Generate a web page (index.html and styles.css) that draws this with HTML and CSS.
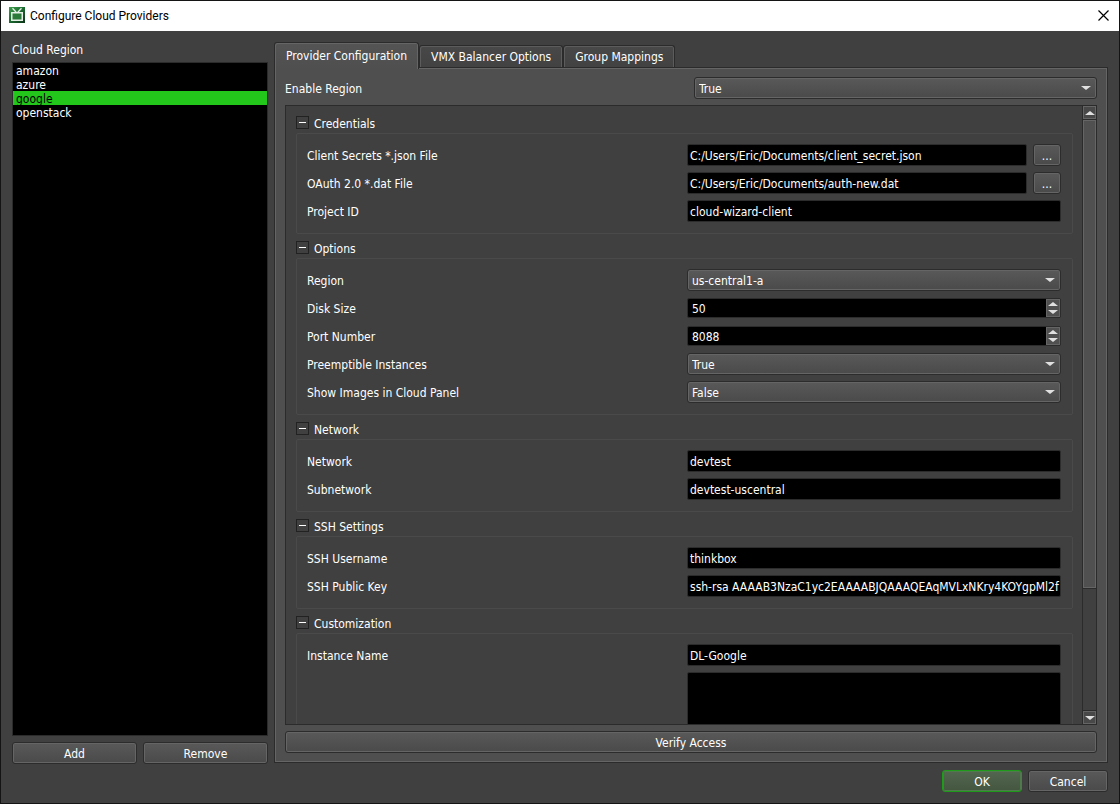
FILE: index.html
```html
<!DOCTYPE html>
<html lang="en">
<head>
<meta charset="utf-8">
<title>Configure Cloud Providers</title>
<link rel="stylesheet" href="styles.css">
</head>
<body>
<div class="dialog">
  <header class="titlebar">
    <svg class="app-icon" viewBox="0 0 16 16" aria-hidden="true">
      <defs><linearGradient id="tv" x1="0" y1="0" x2="1" y2="1"><stop offset="0" stop-color="#3da04c"/><stop offset="0.5" stop-color="#1c6a30"/><stop offset="1" stop-color="#0a3317"/></linearGradient></defs>
      <rect width="16" height="16" fill="url(#tv)"/>
      <rect x="2.75" y="5.75" width="10.5" height="7.5" fill="#2a7a3a" stroke="#e6efe6" stroke-width="1.5"/>
      <path d="M3.5 1.2 7.2 5.2M12.5 1.2 8.8 5.2" stroke="#e6efe6" stroke-width="1.3" fill="none"/>
    </svg>
    <h1 class="title">Configure Cloud Providers</h1>
    <button class="close" aria-label="Close"><svg viewBox="0 0 11 11" aria-hidden="true"><path d="M.5.5l10 10M10.5.5l-10 10" stroke="#000" stroke-width="1.2" fill="none"/></svg></button>
  </header>

  <main class="body">
    <section class="regions">
      <h2 class="caption" id="regions-label">Cloud Region</h2>
      <ul class="region-list" role="listbox" aria-labelledby="regions-label">
        <li class="region" role="option">amazon</li>
        <li class="region" role="option">azure</li>
        <li class="region selected" role="option" aria-selected="true">google</li>
        <li class="region" role="option">openstack</li>
      </ul>
      <div class="region-actions">
        <button class="btn">Add</button>
        <button class="btn">Remove</button>
      </div>
    </section>

    <section class="settings">
      <div class="tabs" role="tablist">
        <button class="tab active" role="tab" aria-selected="true">Provider Configuration</button>
        <button class="tab" role="tab">VMX Balancer Options</button>
        <button class="tab" role="tab">Group Mappings</button>
      </div>
      <div class="pane" role="tabpanel">
        <div class="row">
          <label for="enable">Enable Region</label>
          <span class="combo"><select id="enable"><option>True</option><option>False</option></select></span>
        </div>

        <div class="scroll-area">
          <div class="scroll-view">
            <section class="group">
              <h3 class="group-head"><button class="toggle" aria-expanded="true" aria-label="Collapse Credentials"></button>Credentials</h3>
              <div class="group-body">
                <div class="row"><label for="secrets">Client Secrets *.json File</label><span class="file"><input class="field" id="secrets" type="text" value="C:/Users/Eric/Documents/client_secret.json"><button class="btn browse">...</button></span></div>
                <div class="row"><label for="oauth">OAuth 2.0 *.dat File</label><span class="file"><input class="field" id="oauth" type="text" value="C:/Users/Eric/Documents/auth-new.dat"><button class="btn browse">...</button></span></div>
                <div class="row"><label for="project">Project ID</label><input class="field" id="project" type="text" value="cloud-wizard-client"></div>
              </div>
            </section>

            <section class="group">
              <h3 class="group-head"><button class="toggle" aria-expanded="true" aria-label="Collapse Options"></button>Options</h3>
              <div class="group-body">
                <div class="row"><label for="region">Region</label><span class="combo"><select id="region"><option>us-central1-a</option></select></span></div>
                <div class="row"><label for="disk">Disk Size</label><span class="spin"><input id="disk" type="number" value="50"><span class="steps"><button class="step up" aria-label="Increase disk size"></button><button class="step down" aria-label="Decrease disk size"></button></span></span></div>
                <div class="row"><label for="port">Port Number</label><span class="spin"><input id="port" type="number" value="8088"><span class="steps"><button class="step up" aria-label="Increase port number"></button><button class="step down" aria-label="Decrease port number"></button></span></span></div>
                <div class="row"><label for="preempt">Preemptible Instances</label><span class="combo"><select id="preempt"><option>True</option><option>False</option></select></span></div>
                <div class="row"><label for="images">Show Images in Cloud Panel</label><span class="combo"><select id="images"><option>False</option><option>True</option></select></span></div>
              </div>
            </section>

            <section class="group">
              <h3 class="group-head"><button class="toggle" aria-expanded="true" aria-label="Collapse Network"></button>Network</h3>
              <div class="group-body">
                <div class="row"><label for="network">Network</label><input class="field" id="network" type="text" value="devtest"></div>
                <div class="row"><label for="subnetwork">Subnetwork</label><input class="field" id="subnetwork" type="text" value="devtest-uscentral"></div>
              </div>
            </section>

            <section class="group">
              <h3 class="group-head"><button class="toggle" aria-expanded="true" aria-label="Collapse SSH Settings"></button>SSH Settings</h3>
              <div class="group-body">
                <div class="row"><label for="ssh-user">SSH Username</label><input class="field" id="ssh-user" type="text" value="thinkbox"></div>
                <div class="row"><label for="ssh-key">SSH Public Key</label><input class="field" id="ssh-key" type="text" value="ssh-rsa AAAAB3NzaC1yc2EAAAABJQAAAQEAqMVLxNKry4KOYgpMl2f"></div>
              </div>
            </section>

            <section class="group">
              <h3 class="group-head"><button class="toggle" aria-expanded="true" aria-label="Collapse Customization"></button>Customization</h3>
              <div class="group-body">
                <div class="row"><label for="instance">Instance Name</label><input class="field" id="instance" type="text" value="DL-Google"></div>
                <div class="row"><span></span><textarea class="script" aria-label="Startup script"></textarea></div>
              </div>
            </section>
          </div>
          <div class="scrollbar">
            <button class="scroll-btn up" aria-label="Scroll up"></button>
            <div class="track"><div class="thumb"></div></div>
            <button class="scroll-btn down" aria-label="Scroll down"></button>
          </div>
        </div>

        <button class="btn">Verify Access</button>
      </div>
    </section>
  </main>

  <footer class="footer">
    <button class="btn primary">OK</button>
    <button class="btn">Cancel</button>
  </footer>
</div>
</body>
</html>
```
FILE: styles.css
```css
* { box-sizing: border-box; }

body {
  margin: 0;
  background: #141414;
  color: #fff;
  font: 12px/14px "DejaVu Sans Condensed", Tahoma, sans-serif;
}

button, input, select, textarea { font: inherit; color: inherit; margin: 0; }
h1, h2, h3, ul { margin: 0; padding: 0; font: inherit; }

.dialog {
  display: flex;
  flex-direction: column;
  height: 100vh;
  border: 1px solid #141414;
  background: #404040;
}

.titlebar {
  display: flex;
  align-items: center;
  gap: 5px;
  height: 30px;
  flex: none;
  padding: 0 10px 2px 8px;
  background: #fff;
  color: #000;
}
.app-icon { width: 16px; height: 16px; }
.title { flex: 1; padding-top: 1px; font-family: Roboto, sans-serif; }
.close { display: flex; padding: 0; border: 0; background: none; }
.close svg { width: 11px; height: 11px; }

.body {
  display: flex;
  flex: 1;
  gap: 6px;
  min-height: 0;
  padding: 11px 11px 0;
}

.regions { display: flex; flex-direction: column; width: 256px; flex: none; }
.caption { padding: 1px 0 5px; }
.region-list {
  flex: 1;
  margin-bottom: 6px;
  border: 1px solid #2b2b2b;
  background: #000;
  list-style: none;
}
.region { padding: 2px 3px 0; line-height: 12px; }
.selected { background: #23c61a; color: #000; }
.region-actions { display: grid; grid-template-columns: 1fr 1fr; gap: 6px; }

.btn {
  height: 22px;
  padding: 2px 0 0;
  border: 1px solid #2c2c2c;
  border-radius: 3px;
  background: linear-gradient(#595959, #4a4a4a);
  box-shadow: inset 0 0 0 1px #656565;
  line-height: 18px;
}
.primary {
  border-color: #1f9a1a;
  background: linear-gradient(#53664f, #44563f);
  box-shadow: inset 0 0 0 1px #4f7a4b;
}

.settings {
  display: flex;
  flex: 1;
  flex-direction: column;
  min-width: 0;
  padding-bottom: 1px;
}
.tabs { display: flex; align-items: flex-end; height: 25px; flex: none; }
.tab {
  height: 22px;
  padding: 0 11px;
  border: 1px solid #2b2b2b;
  border-bottom: 0;
  border-radius: 3px 3px 0 0;
  background: linear-gradient(#484848, #424242);
  box-shadow: inset 1px 1px #5c5c5c, inset -1px 0 #5c5c5c;
}
.active {
  position: relative;
  height: 27px;
  margin-bottom: -2px;
  background: linear-gradient(#545454, #4f4f4f);
  box-shadow: inset 1px 1px #656565, inset -1px 0 #656565;
}

.pane {
  display: flex;
  flex: 1;
  flex-direction: column;
  gap: 6px;
  min-height: 0;
  padding: 9px 10px;
  border: 1px solid #2b2b2b;
  background: #4f4f4f;
  box-shadow: inset 0 0 0 1px #656565;
}

.row {
  display: grid;
  grid-template-columns: 1fr 1fr;
  align-items: center;
  gap: 6px;
}
.row label { padding-top: 2px; }

.field, .combo, .spin, .file { min-width: 0; height: 22px; }
.field, .spin, .script {
  border: 1px solid #2c2c2c;
  border-radius: 2px;
  background: #000;
}
.field { width: 100%; padding: 2px 0 0 2px; outline: 0; }
.file { display: flex; gap: 6px; }
.browse { width: 28px; flex: none; }
.script { display: block; width: 100%; height: 120px; resize: none; }

.combo { position: relative; }
.combo select {
  display: block;
  width: 100%;
  height: 22px;
  padding: 2px 4px 0;
  border: 1px solid #2c2c2c;
  border-radius: 3px;
  appearance: none;
  background: linear-gradient(#595959, #4a4a4a);
  box-shadow: inset 0 0 0 1px #656565;
}
.combo::after {
  content: "";
  position: absolute;
  top: 9px;
  right: 6px;
  border: 5px solid transparent;
  border-top: 4px solid #e0e0e0;
  border-bottom: 0;
  pointer-events: none;
}

.spin { display: flex; height: 20px; margin: 1px 0; }
.spin input {
  flex: 1;
  min-width: 0;
  padding: 2px 4px 0;
  border: 0;
  background: none;
  appearance: textfield;
}
.spin input::-webkit-inner-spin-button { appearance: none; margin: 0; }
.steps {
  display: grid;
  grid-template-rows: 1fr 1fr;
  width: 14px;
  padding: 1px 0;
  background: #505050;
  box-shadow: inset 0 0 0 1px #656565;
}
.step, .scroll-btn {
  display: grid;
  place-items: center;
  padding: 0;
  border: 0;
  background: none;
}
.step::before, .scroll-btn::before {
  content: "";
  border: 5px solid transparent;
  border-top: 0;
  border-bottom: 4px solid #e0e0e0;
}
.step.down::before, .scroll-btn.down::before {
  border: 5px solid transparent;
  border-top: 4px solid #e0e0e0;
  border-bottom: 0;
}

.scroll-area {
  display: flex;
  flex: 1;
  min-height: 0;
  border: 1px solid #2b2b2b;
  background: #404040;
}
.scroll-view {
  display: flex;
  flex: 1;
  flex-direction: column;
  gap: 6px;
  min-width: 0;
  padding: 9px 9px 9px 10px;
  overflow: hidden;
}
.group { flex: none; }
.group-head {
  display: flex;
  align-items: center;
  gap: 5px;
  height: 18px;
}
.toggle {
  display: grid;
  place-items: center;
  width: 13px;
  height: 13px;
  margin-bottom: 3px;
  padding: 0;
  border: 1px solid #222;
  background: none;
}
.toggle::before { content: ""; width: 7px; height: 1px; background: #fff; }
.group-body {
  display: grid;
  gap: 6px;
  padding: 10px 11px 11px 10px;
  border: 1px solid #4a4a4a;
  border-radius: 2px;
}

.scrollbar {
  display: flex;
  flex-direction: column;
  width: 14px;
  flex: none;
  border-left: 1px solid #2b2b2b;
}
.scroll-btn { height: 13px; background: #484848; box-shadow: inset 0 0 0 1px #656565; }
.track {
  flex: 1;
  border: solid #2b2b2b;
  border-width: 1px 0;
}
.thumb {
  height: 79.5%;
  border-bottom: 1px solid #2b2b2b;
  background: #505050;
  box-shadow: inset 0 0 0 1px #656565;
}

.footer {
  display: flex;
  justify-content: flex-end;
  gap: 6px;
  padding: 6px 11px 11px;
}
.footer .btn { width: 80px; }
```
